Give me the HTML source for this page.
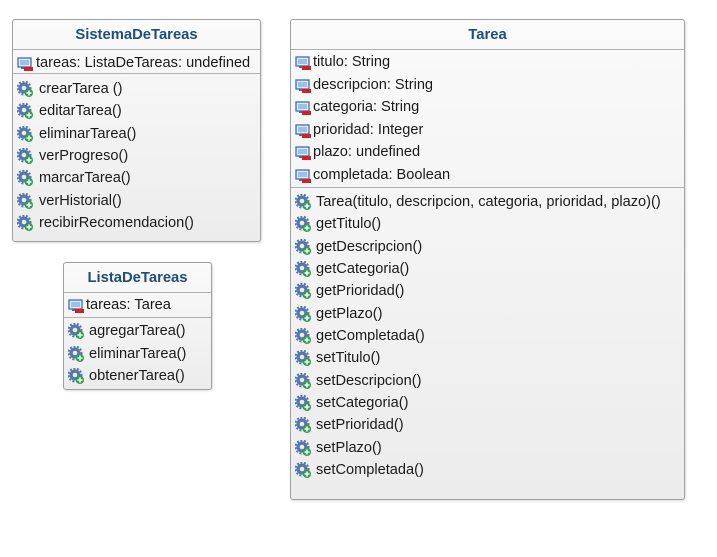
<!DOCTYPE html><html><head><style>
body{margin:0;width:717px;height:557px;background:#fff;position:relative;font-family:"Liberation Sans",sans-serif;font-size:14.6px;color:#1a1a1a;overflow:hidden}
.b{position:absolute;border:1px solid #a0a0a0;border-radius:3px;background:linear-gradient(#fafafa,#ececec);box-shadow:1px 1px 2px rgba(0,0,0,.15)}
.h{position:absolute;left:0;right:0;text-align:center;font-weight:bold;color:#1f4e79;font-size:14.8px}
.l{position:absolute;left:0;right:0;border-top:1px solid #b0b0b0}
.r{position:absolute;height:18px;line-height:18px;white-space:nowrap}
.r svg{position:absolute;left:0;top:1px}
.r span{position:absolute;white-space:nowrap}
</style></head><body>
<svg width="0" height="0" style="position:absolute"><defs>
<g id="a"><rect x="1" y="3" width="13" height="9" fill="#dfe9f5" stroke="#3b6fb0" stroke-width="1.3"/><rect x="3" y="5" width="9" height="5" fill="#9ec0e8"/><rect x="4" y="12" width="7" height="2" fill="#3b6fb0"/><rect x="7" y="12" width="9" height="4" fill="#d81e1e"/></g>
<g id="m"><circle cx="7" cy="7" r="5.5" fill="#5577aa"/><circle cx="7" cy="7" r="6.5" fill="none" stroke="#5577aa" stroke-width="2" stroke-dasharray="2 1.6"/><circle cx="7" cy="7" r="2.3" fill="#e8eef8"/><circle cx="12" cy="12" r="4" fill="#2aa24a"/><path d="M12 9.5v5M9.5 12h5" stroke="#fff" stroke-width="1.6"/></g>
</defs></svg>

<div class="b" style="left:12px;top:19px;width:247px;height:221px">
<div class="h" style="top:7px">SistemaDeTareas</div>
<div class="l" style="top:29px"></div><div class="l" style="top:53px"></div>
</div>
<div class="b" style="left:63px;top:262px;width:147px;height:126px">
<div class="h" style="top:7px">ListaDeTareas</div>
<div class="l" style="top:29px"></div><div class="l" style="top:54px"></div>
</div>
<div class="b" style="left:290px;top:19px;width:393px;height:479px">
<div class="h" style="top:7px">Tarea</div>
<div class="l" style="top:29px"></div><div class="l" style="top:167px"></div>
</div>

<div id="rows"></div>
<script>
var R=[
[17,36,'a',['tareas: ListaDeTareas: undefined'],54,22],
[17,39,'m',['crearTarea ()','editarTarea()','eliminarTarea()','verProgreso()','marcarTarea()','verHistorial()','recibirRecomendacion()'],80,22.3],
[68,86,'a',['tareas: Tarea'],296,22],
[68,89,'m',['agregarTarea()','eliminarTarea()','obtenerTarea()'],322,22.6],
[295,313,'a',['titulo: String','descripcion: String','categoria: String','prioridad: Integer','plazo: undefined','completada: Boolean'],53,22.5],
[295,316,'m',['Tarea(titulo, descripcion, categoria, prioridad, plazo)()','getTitulo()','getDescripcion()','getCategoria()','getPrioridad()','getPlazo()','getCompletada()','setTitulo()','setDescripcion()','setCategoria()','setPrioridad()','setPlazo()','setCompletada()'],193,22.33]];
var h='';R.forEach(function(g){g[3].forEach(function(t,i){var y=g[4]+i*g[5];h+='<div class="r" style="left:'+g[0]+'px;top:'+y.toFixed(1)+'px"><svg width="17" height="17"><use href="#'+g[2]+'"/></svg><span style="left:'+(g[1]-g[0])+'px">'+t.replace(/</g,'&lt;')+'</span></div>';});});
document.getElementById('rows').innerHTML=h;
</script>
</body></html>
